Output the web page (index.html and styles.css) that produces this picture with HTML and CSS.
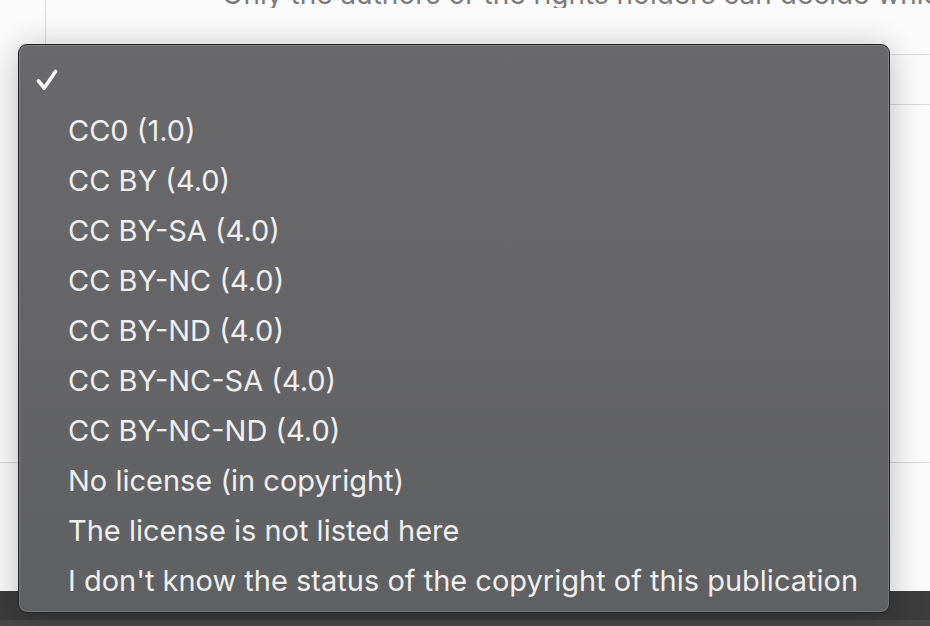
FILE: index.html
```html
<!DOCTYPE html>
<html lang="en">
<head>
<meta charset="utf-8">
<title>License menu</title>
<link rel="stylesheet" href="styles.css">
</head>
<body>
<div class="page">
  <div class="upper">
    <div class="intro">
      <p class="intro-text">Only the authors or the rights holders can decide which license applies to this publication.</p>
    </div>
    <div class="row"></div>
    <div class="rest"></div>
  </div>
  <div class="lower"></div>
  <div class="footer"><div class="footer-band"></div></div>

  <div class="menu" role="listbox">
    <div class="item selected"><span class="mark"><svg width="22" height="22" viewBox="0 0 22 22"><polyline points="2.5,12 8.3,19 19.5,2.5" fill="none" stroke="#fafafa" stroke-width="3.6" stroke-linecap="round" stroke-linejoin="round"/></svg></span><span class="label"></span></div>
    <div class="item"><span class="mark"></span><span class="label">CC0 (1.0)</span></div>
    <div class="item"><span class="mark"></span><span class="label">CC BY (4.0)</span></div>
    <div class="item"><span class="mark"></span><span class="label">CC BY-SA (4.0)</span></div>
    <div class="item"><span class="mark"></span><span class="label">CC BY-NC (4.0)</span></div>
    <div class="item"><span class="mark"></span><span class="label">CC BY-ND (4.0)</span></div>
    <div class="item"><span class="mark"></span><span class="label">CC BY-NC-SA (4.0)</span></div>
    <div class="item"><span class="mark"></span><span class="label">CC BY-NC-ND (4.0)</span></div>
    <div class="item"><span class="mark"></span><span class="label">No license (in copyright)</span></div>
    <div class="item"><span class="mark"></span><span class="label">The license is not listed here</span></div>
    <div class="item"><span class="mark"></span><span class="label">I don't know the status of the copyright of this publication</span></div>
  </div>
</div>
</body>
</html>
```
FILE: styles.css
```css
* { box-sizing: border-box; }
html, body {
  margin: 0;
  padding: 0;
  width: 930px;
  height: 626px;
  overflow: hidden;
  background: #fbfbfb;
  font-family: Inter, "Noto Sans", "Liberation Sans", sans-serif;
}
.page {
  position: relative;
  width: 930px;
  height: 626px;
  display: flex;
  flex-direction: column;
  background: #fbfbfb;
}
.upper {
  margin-left: 45px;
  border-left: 1px solid #dcdcdc;
  display: flex;
  flex-direction: column;
}
.intro {
  height: 55px;
  border-bottom: 1px solid #dcdcdc;
  padding-left: 176px;
}
.intro-text {
  margin: 0;
  height: 8px;
  overflow: hidden;
  white-space: nowrap;
  color: #7b7b7b;
  font-size: 28px;
  line-height: 28px;
  display: flex;
  align-items: flex-end;
}
.row {
  height: 50px;
  border-bottom: 1px solid #dcdcdc;
}
.rest {
  height: 357px;
}
.lower {
  height: 129px;
  border-top: 1px solid #dcdcdc;
}
.footer {
  flex: 1;
  background: #3c3c3c;
  display: flex;
  flex-direction: column;
  justify-content: flex-end;
}
.footer-band {
  height: 6px;
  background: #484848;
}
.menu {
  position: absolute;
  left: 18px;
  top: 44px;
  width: 872px;
  height: 569px;
  border: 1px solid #222222;
  border-radius: 9px;
  background: linear-gradient(to bottom, #69696c 0%, #656568 50%, #5f6062 100%);
  box-shadow: inset 0 0 0 1px rgba(255,255,255,0.16), 0 4px 34px rgba(0,0,0,0.26);
  padding: 10px 0 7px 0;
  display: flex;
  flex-direction: column;
}
.item {
  height: 50px;
  display: flex;
  align-items: center;
  padding-left: 17px;
  color: #efefef;
  font-size: 29px;
  white-space: nowrap;
}
.mark {
  width: 32px;
  display: flex;
  align-items: center;
}
.mark svg { display: block; }
.label { letter-spacing: 0; }
```
